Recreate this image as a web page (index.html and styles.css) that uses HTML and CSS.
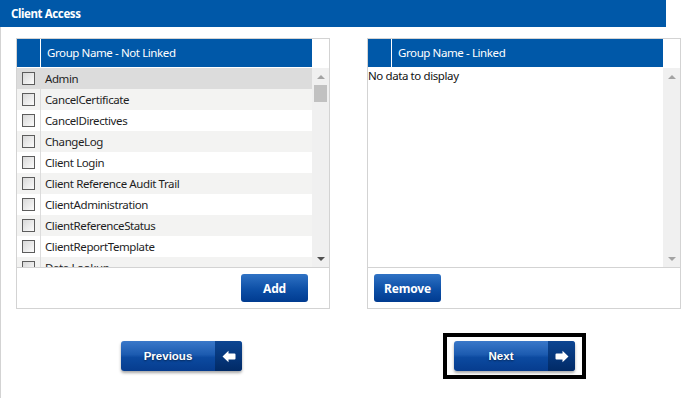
FILE: index.html
```html
<!DOCTYPE html>
<html lang="en">
<head>
  <meta charset="UTF-8">
  <title>Client Access</title>
  <meta name="viewport" content="width=device-width, initial-scale=1.0">
  <link rel="stylesheet" href="styles.css">
</head>
<body>
  <div class="page">
    <div class="title-bar">Client Access</div>
    <div class="content">
      <div class="panels">
        <div class="panel">
          <div class="grid-head">
            <div class="head-cells">
              <div class="head-check"></div>
              <div class="head-title">Group Name - Not Linked</div>
            </div>
            <div class="head-gap"></div>
          </div>
          <div class="grid-body">
            <div class="rows">
              <div class="row selected"><div class="cell-check"><span class="box"></span></div><div class="cell-text">Admin</div></div>
              <div class="row alt"><div class="cell-check"><span class="box"></span></div><div class="cell-text">CancelCertificate</div></div>
              <div class="row"><div class="cell-check"><span class="box"></span></div><div class="cell-text">CancelDirectives</div></div>
              <div class="row alt"><div class="cell-check"><span class="box"></span></div><div class="cell-text">ChangeLog</div></div>
              <div class="row"><div class="cell-check"><span class="box"></span></div><div class="cell-text">Client Login</div></div>
              <div class="row alt"><div class="cell-check"><span class="box"></span></div><div class="cell-text">Client Reference Audit Trail</div></div>
              <div class="row"><div class="cell-check"><span class="box"></span></div><div class="cell-text">ClientAdministration</div></div>
              <div class="row alt"><div class="cell-check"><span class="box"></span></div><div class="cell-text">ClientReferenceStatus</div></div>
              <div class="row"><div class="cell-check"><span class="box"></span></div><div class="cell-text">ClientReportTemplate</div></div>
              <div class="row alt"><div class="cell-check"><span class="box"></span></div><div class="cell-text">Data Lookup</div></div>
            </div>
            <div class="vscroll">
              <span class="arrow up"></span>
              <span class="thumb"></span>
              <span class="track"></span>
              <span class="arrow down dark"></span>
            </div>
          </div>
          <div class="panel-foot right">
            <button class="btn">Add</button>
          </div>
        </div>

        <div class="panel">
          <div class="grid-head">
            <div class="head-cells">
              <div class="head-check"></div>
              <div class="head-title">Group Name - Linked</div>
            </div>
            <div class="head-gap"></div>
          </div>
          <div class="grid-body">
            <div class="rows">
              <div class="empty">No data to display</div>
            </div>
            <div class="vscroll">
              <span class="arrow up"></span>
              <span class="track"></span>
              <span class="arrow down"></span>
            </div>
          </div>
          <div class="panel-foot">
            <button class="btn">Remove</button>
          </div>
        </div>
      </div>

      <div class="nav">
        <button class="nav-btn">
          <span class="nav-label">Previous</span>
          <span class="nav-icon">
            <svg width="14" height="13" viewBox="0 0 14 13"><path d="M0.5 6.5 L6.5 0.8 L6.5 3.5 L12.5 3.5 Q13.5 3.5 13.5 4.5 L13.5 8.5 Q13.5 9.5 12.5 9.5 L6.5 9.5 L6.5 12.2 Z" fill="#fff"/></svg>
          </span>
        </button>
        <span class="focus-ring">
          <button class="nav-btn">
            <span class="nav-label">Next</span>
            <span class="nav-icon">
              <svg width="14" height="13" viewBox="0 0 14 13"><path d="M13.5 6.5 L7.5 0.8 L7.5 3.5 L1.5 3.5 Q0.5 3.5 0.5 4.5 L0.5 8.5 Q0.5 9.5 1.5 9.5 L7.5 9.5 L7.5 12.2 Z" fill="#fff"/></svg>
            </span>
          </button>
        </span>
      </div>
    </div>
  </div>
</body>
</html>
```

FILE: styles.css
```css
*{box-sizing:border-box;margin:0;padding:0;}
body{
  background:#fff;
  font-family:"Noto Sans","Open Sans",Arial,sans-serif;
  font-size:11.5px;
  letter-spacing:-0.4px;
  color:#1e1e1e;
}
.page{width:685px;height:398px;}
.title-bar{
  width:666px;
  height:27px;
  background:#0058a8;
  color:#fff;
  font-weight:bold;
  line-height:27px;
  padding-left:11px;
}
.content{
  border-left:1px solid #d3d3d3;
  height:371px;
  padding:11px 0 0 15px;
}
.panels{
  display:flex;
  gap:37px;
}
.panel{
  width:314px;
  border:1px solid #d3d3d3;
}
.grid-head{display:flex;height:29px;}
.head-cells{
  flex:1;
  display:flex;
  background:#0058a8;
  margin-bottom:1px;
}
.head-check{width:24px;border-right:1px solid #fff;}
.head-title{
  color:#fff;
  padding-left:6px;
  line-height:28px;
}
.head-gap{width:17px;}
.grid-body{
  display:flex;
  height:200px;
  border-bottom:1px solid #d3d3d3;
}
.rows{flex:1;overflow:hidden;}
.row{display:flex;height:21px;background:#fff;}
.row.alt{background:#f3f3f2;}
.row.selected{background:#dcdcdc;}
.cell-check{
  width:24px;
  border-right:1px solid #dcdcdc;
  display:flex;
  align-items:center;
  padding-left:5px;
}
.box{
  width:13px;
  height:13px;
  border:1px solid #5c5c5c;
  background:linear-gradient(135deg,#d8d8d8,#fbfbfb);
}
.cell-text{padding-left:4px;line-height:21px;white-space:nowrap;}
.empty{line-height:14px;padding-top:1px;color:#111;}
.vscroll{
  width:17px;
  background:#f0f0f0;
  display:flex;
  flex-direction:column;
  align-items:center;
}
.arrow{width:17px;height:17px;display:flex;align-items:center;justify-content:center;}
.arrow::before{
  content:"";
  border-left:4px solid transparent;
  border-right:4px solid transparent;
}
.arrow.up::before{border-bottom:4px solid #a3a3a3;}
.arrow.down::before{border-top:4px solid #a3a3a3;}
.arrow.down.dark::before{border-top-color:#505050;}
.thumb{width:13px;height:17px;background:#c1c1c1;}
.track{flex:1;}
.panel-foot{
  height:40px;
  display:flex;
  align-items:flex-start;
  padding:6px 21px 0 6px;
}
.panel-foot.right{justify-content:flex-end;}
.btn{
  height:28px;
  min-width:67px;
  padding:0 10px;
  border:none;
  border-radius:3px;
  background:linear-gradient(#2f72c4,#0d4fa6 55%,#003b90);
  color:#fff;
  font-family:"Noto Sans","Open Sans",Arial,sans-serif;
  font-weight:bold;
  font-size:12px;
  letter-spacing:-0.2px;
  cursor:pointer;
}
.nav{
  display:flex;
  align-items:center;
  gap:201px;
  padding:24px 0 0 105px;
}
.nav-btn{
  display:flex;
  width:121px;
  height:30px;
  border:none;
  border-radius:3px;
  overflow:hidden;
  background:linear-gradient(#3a78c9,#1c5bb0 45%,#0c4aa0 55%,#063c8e);
  box-shadow:0 2px 3px rgba(0,0,0,.35);
  color:#fff;
  font-family:"Liberation Sans",Arial,sans-serif;
  font-size:11.5px;
  font-weight:bold;
  letter-spacing:0;
  cursor:pointer;
}
.nav-label{
  flex:1;
  line-height:30px;
  text-align:center;
  text-shadow:0 1px 2px rgba(0,0,0,.5);
}
.nav-icon{
  width:27px;
  display:flex;
  align-items:center;
  justify-content:center;
  background:linear-gradient(#0c4592,#012a66);
}
.focus-ring{
  display:inline-block;
  border:4px solid #000;
  padding:4px 7px;
}
```
